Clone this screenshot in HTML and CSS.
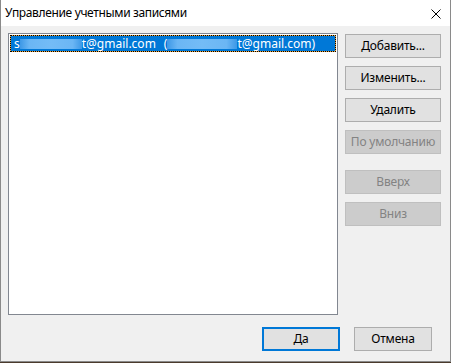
FILE: index.html
```html
<!DOCTYPE html>
<html lang="ru">
<head>
<meta charset="utf-8">
<title>Управление учетными записями</title>
<link rel="stylesheet" href="styles.css">
</head>
<body>
<div class="window">
  <div class="titlebar">
    <span class="title">Управление учетными записями</span>
    <svg class="close" width="10" height="10" viewBox="0 0 10 10" aria-label="Закрыть">
      <path d="M0.5 0.5 L9.5 9.5 M9.5 0.5 L0.5 9.5" stroke="#000" stroke-width="1" fill="none"/>
    </svg>
  </div>
  <div class="client">
    <div class="main">
      <div class="listbox">
        <div class="item selected"><span class="txt">s</span><span class="redact r1"></span><span class="txt">t@gmail.com</span><span class="txt paren">(</span><span class="redact r2"></span><span class="txt">t@gmail.com)</span></div>
      </div>
      <div class="side">
        <button class="btn">Добавить...</button>
        <button class="btn">Изменить...</button>
        <button class="btn">Удалить</button>
        <button class="btn disabled">По умолчанию</button>
        <button class="btn disabled spaced">Вверх</button>
        <button class="btn disabled">Вниз</button>
      </div>
    </div>
    <div class="footer">
      <button class="btn wide default">Да</button>
      <button class="btn wide">Отмена</button>
    </div>
  </div>
</div>
</body>
</html>
```

FILE: styles.css
```css
html, body {
  margin: 0;
  padding: 0;
}
body {
  background: #4a3a2c;
  width: 451px;
  height: 363px;
  overflow: hidden;
  font-family: "Noto Sans", "Open Sans", sans-serif;
  font-size: 12px;
}
.window {
  width: 451px;
  height: 362px;
  box-sizing: border-box;
  border-left: 1px solid #8a8a8a;
  border-right: 1px solid #8a8a8a;
  border-bottom: 1px solid #8a8a8a;
  background: #f0f0f0;
  display: flex;
  flex-direction: column;
}
.titlebar {
  height: 26px;
  flex: none;
  background: #ffffff;
  display: flex;
  align-items: center;
  justify-content: space-between;
  padding: 0 9px 0 4px;
}
.title {
  color: #000;
  font-size: 12px;
  letter-spacing: -0.35px;
  line-height: 16px;
  margin-top: -1px;
}
.close {
  display: block;
  margin-top: 2px;
}
.client {
  flex: 1;
  display: flex;
  flex-direction: column;
  padding: 7px 0 10px 7px;
}
.main {
  display: flex;
  align-items: flex-start;
}
.listbox {
  width: 330px;
  height: 282px;
  box-sizing: border-box;
  border: 1px solid #828790;
  background: #fff;
  padding: 1px;
}
.item {
  height: 17px;
  box-sizing: border-box;
  display: flex;
  align-items: center;
  padding-left: 3px;
  white-space: pre;
  color: #fff;
  font-size: 12px;
}
.selected {
  border: 1px dotted #000;
  background: linear-gradient(#0078d7, #0078d7) padding-box, #e9a23b border-box;
}
.paren {
  margin-left: 8px;
}
.redact {
  display: inline-block;
  height: 10px;
  margin-top: 1px;
  background: linear-gradient(90deg, #3d98e6 0%, #6bb6f4 15%, #74bcf6 50%, #6bb6f4 85%, #3d98e6 100%);
}
.r1 { width: 62px; }
.r2 { width: 70px; }
.side {
  margin-left: 7px;
  display: flex;
  flex-direction: column;
  gap: 8px;
  padding-top: 1px;
}
.btn {
  width: 96px;
  height: 24px;
  box-sizing: border-box;
  border: 1px solid #adadad;
  background: #e1e1e1;
  color: #000;
  font-family: "Noto Sans", "Open Sans", sans-serif;
  font-size: 12px;
  letter-spacing: -0.2px;
  padding: 0;
  margin: 0;
  line-height: 20px;
}
.btn.disabled {
  background: #cccccc;
  border-color: #bfbfbf;
  color: #838383;
}
.btn.spaced {
  margin-top: 8px;
}
.footer {
  margin-top: 12px;
  display: flex;
  justify-content: flex-end;
  gap: 14px;
  padding-right: 18px;
}
.btn.wide {
  width: 78px;
}
.btn.default {
  border: 2px solid #0078d7;
}
```
